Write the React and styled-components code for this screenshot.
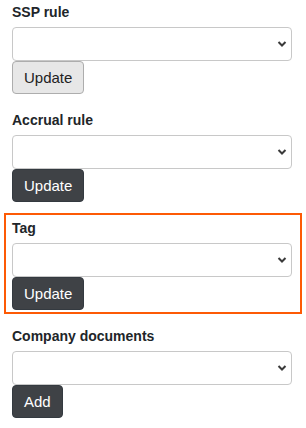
import React from 'react';
import styled, { createGlobalStyle } from 'styled-components';

const GlobalStyle = createGlobalStyle`
  body {
    margin: 0;
    background: #fff;
    font-family: "Liberation Sans", Arial, sans-serif;
    color: #212529;
  }
`;

const Page = styled.div`
  width: 306px;
  padding: 4px 12px 0 12px;
  box-sizing: border-box;
`;

const Field = styled.div`
  display: flex;
  flex-direction: column;
  align-items: flex-start;
  margin-top: ${(p) => p.$gap || 0}px;
`;

const Highlight = styled.div`
  margin: 11px -8px 0 -8px;
  padding: 5px 6px 2px 6px;
  border: 2px solid #fd5a05;
`;

const Label = styled.label`
  font-size: 14px;
  line-height: 16px;
  font-weight: bold;
  margin-bottom: 7px;
`;

const SelectWrap = styled.div`
  position: relative;
  width: 280px;
`;

const Select = styled.select`
  display: block;
  width: 100%;
  height: 34px;
  box-sizing: border-box;
  border: 1px solid #c8c8c8;
  border-radius: 4px;
  background: #fff;
  appearance: none;
  -webkit-appearance: none;
  outline: none;
`;

const Chevron = styled.svg`
  position: absolute;
  right: 5px;
  top: 13px;
  pointer-events: none;
`;

const Button = styled.button`
  height: 33px;
  padding: 0 11px;
  font-family: "Liberation Sans", Arial, sans-serif;
  font-size: 15px;
  border-radius: 4px;
  cursor: pointer;
  border: 1px solid ${(p) => (p.$light ? '#adadad' : '#343a40')};
  background: ${(p) => (p.$light ? '#e7e7e7' : '#3f4246')};
  color: ${(p) => (p.$light ? '#222' : '#fff')};
`;

const Dropdown = () => (
  <SelectWrap>
    <Select>
      <option></option>
    </Select>
    <Chevron width="10" height="8" viewBox="0 0 10 8">
      <path d="M1.5 2 L5 5.5 L8.5 2" fill="none" stroke="#3a3a3a" strokeWidth="2" />
    </Chevron>
  </SelectWrap>
);

const App = () => (
  <Page>
    <GlobalStyle />
    <Field>
      <Label>SSP rule</Label>
      <Dropdown />
      <Button $light>Update</Button>
    </Field>
    <Field $gap={18}>
      <Label>Accrual rule</Label>
      <Dropdown />
      <Button>Update</Button>
    </Field>
    <Highlight>
      <Field>
        <Label>Tag</Label>
        <Dropdown />
        <Button>Update</Button>
      </Field>
    </Highlight>
    <Field $gap={14}>
      <Label>Company documents</Label>
      <Dropdown />
      <Button>Add</Button>
    </Field>
  </Page>
);

export default App;
